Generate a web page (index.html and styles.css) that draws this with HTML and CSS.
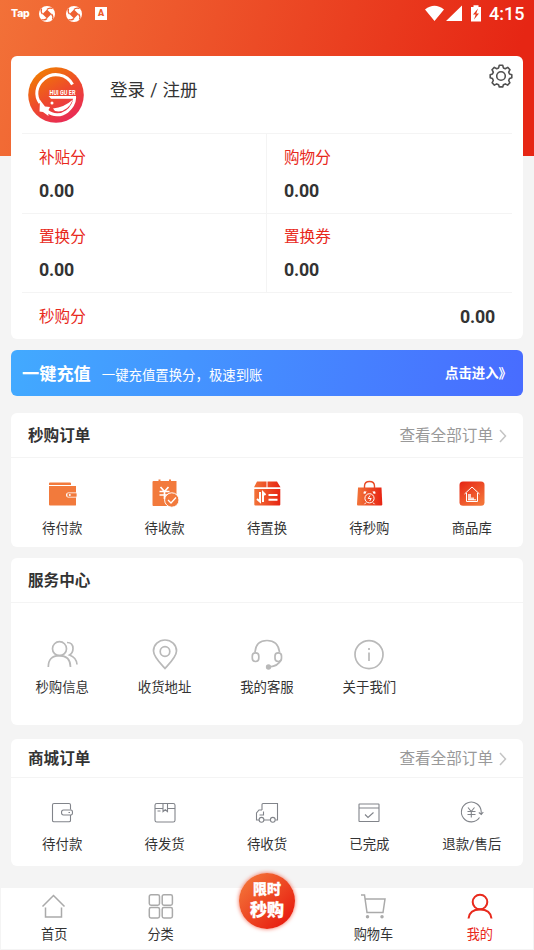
FILE: index.html
```html
<!DOCTYPE html>
<html lang="zh-CN">
<head>
<meta charset="utf-8">
<meta name="viewport" content="width=device-width">
<title>我的</title>
<link rel="stylesheet" href="styles.css">
</head>
<body>
<svg class="defs" width="0" height="0">
  <defs>
    <linearGradient id="warm" x1="0" y1="0" x2="1" y2="0"><stop offset="0" stop-color="#f27439"/><stop offset="1" stop-color="#e72413"/></linearGradient>
    <linearGradient id="warmRev" x1="0" y1="0" x2="0.7" y2="1"><stop offset="0" stop-color="#e62515"/><stop offset="1" stop-color="#f37338"/></linearGradient>
    <linearGradient id="logo" x1="0.2" y1="0" x2="0.8" y2="1"><stop offset="0" stop-color="#f08000"/><stop offset="0.5" stop-color="#ee4a2c"/><stop offset="1" stop-color="#e8265c"/></linearGradient>
    <symbol id="swirl" viewBox="0 0 18 18">
      <circle cx="9" cy="9" r="8" fill="#fff"/>
      <path d="M9 4.500L13.500 9 9 13.500 4.500 9z" fill="#ee6031"/>
      <path d="M9 4.500Q11 2.500 14.500 3.500M13.500 9Q15.500 11 14.500 14.500M9 13.500Q7 15.500 3.500 14.500M4.500 9Q2.500 7 3.500 3.500" fill="none" stroke="#ee6031" stroke-width="1.300"/>
    </symbol>
  </defs>
</svg>
<div class="page">
  <header class="hero">
    <div class="status">
      <span class="tap">Tap</span>
      <svg class="swirl" width="18" height="18"><use href="#swirl"/></svg>
      <svg class="swirl second" width="18" height="18"><use href="#swirl"/></svg>
      <span class="a-badge">A</span>
      <span class="spacer"></span>
      <svg width="56" height="18" viewBox="0 0 56 18" fill="#fff">
        <path d="M0 4.500Q9.500-3 19 4.500L9.500 16zM37 .5V16H21zM46 2h2.500V.300h5V2H56v14.500H46V2z"/>
        <path d="M53 3.500l-5 6h2.700L49 14.500l5-6h-2.700z" fill="#e93a1c"/>
      </svg>
      <span class="clock">4:15</span>
    </div>
  </header>

  <main class="content">
    <section class="card account">
      <div class="profile">
        <svg width="56" height="56" viewBox="0 0 56 56">
          <circle cx="28" cy="28" r="27.800" fill="url(#logo)"/>
          <path d="M44.500 17.500C39 7 25 4.500 16 12 7.500 19 7 29 12 36" fill="none" stroke="#fff" stroke-width="3"/>
          <path d="M19 44c6 5 14 5 20 .5 5-4 7.500-9 7.700-14" fill="none" stroke="#fff" stroke-width="3"/>
          <path d="M12 33l5 6.500 5 .5-2 4 .5 5-5.500-4-3.500-.5zM25 41.500q11-1 20-9-6 14-18 11.500zM20.500 29H48v2.800H23z" fill="#fff"/>
          <circle cx="24" cy="36" r="1.500" fill="#fff"/>
          <text x="21.500" y="27.500" textLength="26" lengthAdjust="spacingAndGlyphs" class="logo-text">HUI GU ER</text>
        </svg>
        <span class="login">登录 / 注册</span>
        <svg class="gear" width="24" height="24" viewBox="0 0 24 24" fill="none" stroke="#515151" stroke-width="1.600" stroke-linejoin="round">
          <circle cx="12" cy="12" r="4.300"/>
          <path d="M10.300 1.300h3.400l.7 2.600 1.900.8 2.400-1.300 2.300 2.300-1.300 2.400.8 1.900 2.300.7v3.100l-2.300.8-.8 1.900 1.200 2.300-2.300 2.300-2.300-1.200-1.900.8-.7 2.200h-3.400l-.7-2.200-1.900-.8-2.300 1.200-2.300-2.300 1.200-2.300-.8-1.900-2.300-.8v-3.100l2.300-.7.8-1.900-1.300-2.400 2.300-2.300 2.400 1.300 1.900-.8z"/>
        </svg>
      </div>
      <div class="points">
        <div class="cell"><span>补贴分</span><b>0.00</b></div>
        <div class="cell"><span>购物分</span><b>0.00</b></div>
        <div class="cell"><span>置换分</span><b>0.00</b></div>
        <div class="cell"><span>置换券</span><b>0.00</b></div>
        <div class="total"><span>秒购分</span><b>0.00</b></div>
      </div>
    </section>

    <section class="banner">
      <span class="banner-title">一键充值</span>
      <span class="banner-sub">一键充值置换分，极速到账</span>
      <span class="banner-go">点击进入》</span>
    </section>

    <section class="card flash">
      <div class="head"><h2>秒购订单</h2><span class="more">查看全部订单<svg width="8" height="14" viewBox="0 0 8 14"><path d="M1 1l5.500 6L1 13" fill="none" stroke="#c4c4c4" stroke-width="1.500"/></svg></span></div>
      <div class="grid">
        <div class="item">
          <svg width="32" height="32" viewBox="0 0 32 32"><path d="M3 5.500q0-1 1-1h20q1 0 1 1V7H3zM3 8h27v7h-8q-2 0-2 2t2 2h8v8q0 .5-1 .5H4q-1 0-1-1z" fill="#f27a3c"/><rect x="21" y="14.800" width="10" height="4.400" rx="1" fill="#f27a3c" stroke="#fff" stroke-width=".8"/><circle cx="23.800" cy="17" r="1" fill="#fff"/></svg>
          <span>待付款</span></div>
        <div class="item">
          <svg width="32" height="32" viewBox="0 0 32 32"><path d="M4.500 3h5V1.500h2V3h8.500V1.500h2V3h5.500v25h-23q-1 0-1-1V4q0-1 1-1z" fill="#f27a3c"/><path d="M11.500 9l4 4.500 4-4.500M10.500 13.500h10M10.500 17h10M15.500 13v8" fill="none" stroke="#fff" stroke-width="1.700"/><circle cx="22.800" cy="22" r="7.200" fill="#f27a3c" stroke="#fff"/><path d="M19 22l3 3 5-5.500" fill="none" stroke="#fff" stroke-width="1.300"/></svg>
          <span>待收款</span></div>
        <div class="item">
          <svg width="32" height="32" viewBox="0 0 32 32"><path d="M6 3.500h9.500v5.700H3zM16.500 3.500H26l3.500 5.700h-13zM3.300 11h26v15.500q0 1-1 1h-24q-1 0-1-1z" fill="url(#warm)"/><path d="M9 14v9.500L6 21M12 24v-9.500l2.500 2.500M17.500 17h9M17.500 21.700h9" fill="none" stroke="#fff" stroke-width="2"/></svg>
          <span>待置换</span></div>
        <div class="item">
          <svg width="32" height="32" viewBox="0 0 32 32"><path d="M5 9.500h23.500l.8 17q0 1-1 1H5q-1 0-1-1z" fill="url(#warm)"/><path d="M11.500 10V8q0-4.500 5-4.500t5 4.500v2" fill="none" stroke="#e94b27" stroke-width="1.400"/><circle cx="16.500" cy="20.300" r="4.600" fill="none" stroke="#fff"/><path d="M11 15.500l2-2M22 15.500l-2-2M13 24.500l-1.500 1.700M20 24.500l1.500 1.700M17 17.500l-1.800 3h3l-1.500 2.500" fill="none" stroke="#fff" stroke-width="1"/><circle cx="11.800" cy="14.500" r="1.200" fill="#fff"/><circle cx="21.200" cy="14.500" r="1.200" fill="#fff"/></svg>
          <span>待秒购</span></div>
        <div class="item">
          <svg width="32" height="32" viewBox="0 0 32 32"><rect x="3.500" y="3.500" width="25" height="24.300" rx="3.500" fill="url(#warmRev)"/><path d="M8.500 16L16 9l7.500 7M10.500 15v8.500h11V15" fill="none" stroke="#fff" stroke-width="1"/><path d="M12 16h3v3.500h3V22h-6z" fill="#fff" opacity=".75"/><path d="M12 21.800h8" stroke="#fff"/></svg>
          <span>商品库</span></div>
      </div>
    </section>

    <section class="card service">
      <div class="head"><h2>服务中心</h2></div>
      <div class="grid thin">
        <div class="item">
          <svg width="32" height="32" viewBox="0 0 32 32"><circle cx="13.500" cy="10.700" r="7"/><path d="M2.300 29q0-11.300 11-11.300T24.500 29M21 4.500q6 0 6 6 0 4.500-3.500 6.500 7 2.500 7.500 9.500"/></svg>
          <span>秒购信息</span></div>
        <div class="item">
          <svg width="32" height="32" viewBox="0 0 32 32"><path d="M16 30.500C13 27 4.500 19 4.500 13a11.500 11 0 0 1 23 0C27.500 19 19 27 16 30.500z"/><circle cx="16" cy="13.500" r="4.800"/></svg>
          <span>收货地址</span></div>
        <div class="item">
          <svg width="32" height="32" viewBox="0 0 32 32"><path d="M4 14Q5 2.500 16 2.500T28.500 14M30 22q-3 6-11.500 7"/><rect x="1.300" y="14.800" width="6.500" height="8.700" rx="3.200"/><rect x="24" y="14.800" width="6.500" height="8.700" rx="3.200"/><circle cx="17.500" cy="29" r="1.800" fill="#b9b9b9"/></svg>
          <span>我的客服</span></div>
        <div class="item">
          <svg width="32" height="32" viewBox="0 0 32 32"><circle cx="16" cy="16.600" r="14"/><path d="M16 14.500v8.500M16 10v2"/></svg>
          <span>关于我们</span></div>
      </div>
    </section>

    <section class="card mall">
      <div class="head"><h2>商城订单</h2><span class="more">查看全部订单<svg width="8" height="14" viewBox="0 0 8 14"><path d="M1 1l5.500 6L1 13" fill="none" stroke="#c4c4c4" stroke-width="1.500"/></svg></span></div>
      <div class="grid line">
        <div class="item">
          <svg width="32" height="32" viewBox="0 0 32 32"><path d="M24.500 12.500V8q0-1.500-1.500-1.500H8Q6.500 6.500 6.500 8v15.500q0 1.300 1.500 1.300h15q1.500 0 1.500-1.300V18"/><path d="M17.500 13H25q1.500 0 1.500 2.500T25 18h-7.500q-2 0-2-2.500t2-2.500zM22.500 15.500h1.500"/></svg>
          <span>待付款</span></div>
        <div class="item">
          <svg width="32" height="32" viewBox="0 0 32 32"><rect x="6" y="6.500" width="20" height="18.500" rx="1.800"/><path d="M6 11.500h8M18.500 11.500H26M14 6.500v8l2.300-1.800 2.200 1.800v-8M8.500 14h3"/></svg>
          <span>待发货</span></div>
        <div class="item">
          <svg width="32" height="32" viewBox="0 0 32 32"><path d="M11 13V7.500q0-1 1-1h14.500V23h-2M19.500 23H13M8 23H5.500v-7L8 13h3M12.500 14.500V18h-4"/><circle cx="10.500" cy="22.800" r="2.400"/><circle cx="21.800" cy="22.800" r="2.400"/></svg>
          <span>待收货</span></div>
        <div class="item">
          <svg width="32" height="32" viewBox="0 0 32 32"><rect x="6" y="7" width="20" height="17.500" rx=".5"/><path d="M6 11h20M12 17.500l3 3 5.500-5"/></svg>
          <span>已完成</span></div>
        <div class="item">
          <svg width="32" height="32" viewBox="0 0 32 32"><path d="M23.500 20.500A9.900 9.900 0 1 1 25.200 14.500V17M22.800 15.500l2.500 2 2-2.500M12 10.500l3.200 4 3.300-4M11.500 14.500h8M11.500 17.500h8M15.300 14.500v6"/></svg>
          <span>退款/售后</span></div>
      </div>
    </section>
  </main>

  <nav class="tabs">
    <a class="tab"><svg width="28" height="28" viewBox="0 0 28 28"><path d="M2.500 14.500L13.500 3.500l11 11M5.500 15.500V25h16v-9.500"/></svg><span>首页</span></a>
    <a class="tab"><svg width="28" height="28" viewBox="0 0 28 28"><rect x="2.300" y="2.700" width="10.200" height="10.500" rx="1.700"/><rect x="15.200" y="2.700" width="10.200" height="10.500" rx="1.700"/><rect x="2.300" y="15.500" width="10.200" height="10.500" rx="1.700"/><rect x="15.200" y="15.500" width="10.200" height="10.500" rx="1.700"/></svg><span>分类</span></a>
    <a class="tab"><span class="promo"><span class="small">限时</span><span class="big">秒购</span></span></a>
    <a class="tab"><svg width="28" height="28" viewBox="0 0 28 28"><path d="M2 3h3.500L8 20.500h16L26 7H6"/><circle cx="8.500" cy="24.700" r="1" fill="#aaa"/><circle cx="23" cy="24.700" r="1" fill="#aaa"/></svg><span>购物车</span></a>
    <a class="tab active"><svg width="28" height="28" viewBox="0 0 28 28"><circle cx="14" cy="10" r="7.300"/><path d="M2.500 26.500Q3.500 17.500 14 17.500t11.500 9"/></svg><span>我的</span></a>
  </nav>
</div>
</body>
</html>
```
FILE: styles.css
```css
* { box-sizing: border-box; }
body {
  margin: 0;
  background: #f4f4f4;
  color: #333;
  font-family: Roboto, "Noto Sans CJK SC", sans-serif;
}
.defs { display: block; position: absolute; }
.page { height: 950px; display: flex; flex-direction: column; overflow: hidden; }

.hero {
  height: 156px;
  flex: none;
  background: linear-gradient(107deg, #f27138 0%, #e62614 92%);
}
.status { display: flex; align-items: center; height: 27px; padding: 0 9px 0 11px; color: #fff; }
.tap { width: 27px; font: 800 10.5px/16px Inter, sans-serif; letter-spacing: -.2px; }
.swirl { flex: none; }
.second { margin-left: 9px; }
.a-badge {
  width: 12px; height: 13px; margin-left: 12px;
  background: #fff; color: #ee5a2a;
  font: 900 9px/13px Roboto, sans-serif; text-align: center;
}
.spacer { flex: 1; }
.clock { width: 36px; margin-left: 8px; font-size: 18px; font-weight: 500; line-height: 27px; white-space: nowrap; }

.content { flex: none; height: 832px; margin-top: -100px; padding: 0 11px; }
.card { background: #fff; border-radius: 6px; overflow: hidden; }
.account { height: 283px; padding: 0 11px; }
.profile { display: flex; align-items: flex-start; height: 77px; padding: 11px 0 0 6px; }
.logo-text { font: 700 6.5px Roboto, sans-serif; fill: #fff; }
.login { margin-left: 26px; margin-top: 11px; font-size: 17.5px; line-height: 24px; word-spacing: .8px; }
.gear { margin: -3px -1px 0 auto; }
.points { display: grid; grid-template-columns: 1fr 1fr; grid-template-rows: 80px 79px 47px; }
.cell { border-top: 1px solid #f4f4f4; padding: 12px 17px; }
.cell:nth-child(odd) { border-right: 1px solid #f4f4f4; }
.points span { display: block; color: #e8291c; font-size: 15.6px; line-height: 24px; }
.points b { display: block; font-size: 17.8px; line-height: 24px; font-weight: 700; letter-spacing: -.2px; }
.cell b { margin-top: 9px; }
.cell:nth-child(n+3) { padding-top: 11px; }
.total {
  grid-column: 1 / 3;
  display: flex; justify-content: space-between; align-items: center;
  border-top: 1px solid #f4f4f4; padding: 2px 17px 0;
}

.banner {
  display: flex; align-items: center;
  height: 46px; margin-top: 11px; padding: 0 11px;
  border-radius: 6px;
  background: linear-gradient(100deg, #42aaff, #486cff);
  color: #fff;
}
.banner-title { padding-top: 2px; font-size: 17.2px; font-weight: 700; line-height: 24px; }
.banner-sub { margin-left: 11px; padding-top: 5px; font-size: 13.4px; line-height: 20px; }
.banner-go { margin: 2px 0 0 auto; font-size: 13.4px; font-weight: 700; line-height: 20px; }

.head {
  display: flex; align-items: center; justify-content: space-between;
  height: 45px; padding: 2px 16px 0 17px;
  border-bottom: 1px solid #f4f4f4;
}
h2 { margin: 0; font-size: 15.6px; font-weight: 700; line-height: 24px; }
.more { display: flex; align-items: center; gap: 6px; color: #999; font-size: 15.6px; line-height: 24px; }
.grid { display: grid; grid-template-columns: repeat(5, 1fr); }
.item { display: flex; flex-direction: column; align-items: center; font-size: 13.4px; line-height: 20px; }
.item span { white-space: nowrap; }
.flash { height: 134px; margin-top: 17px; }
.flash .grid { padding-top: 20px; }
.flash .item { gap: 9px; }
.service { height: 167px; margin-top: 11px; }
.service .grid { padding-top: 35px; }
.service .item { gap: 8px; }
.thin svg { fill: none; stroke: #b9b9b9; stroke-width: 1.7; }
.mall { height: 127px; margin-top: 14px; }
.mall .head { height: 39px; padding-top: 1px; }
.mall .grid { padding-top: 19px; }
.mall .item { gap: 6px; }
.line svg { fill: none; stroke: #81848a; stroke-width: 1.1; }

.tabs { display: flex; flex: none; height: 61px; margin: 0 1px; background: #fff; }
.tab { flex: 1; display: flex; flex-direction: column; align-items: center; padding-top: 4px; font-size: 13.2px; line-height: 20px; }
.tab > span { margin-top: 5px; }
.tab svg { fill: none; stroke: #aaa; stroke-width: 1.5; }
.tab.active { color: #e8291c; }
.tab.active svg { stroke: #e8291c; stroke-width: 2; }
.tab .promo {
  display: flex; flex-direction: column; align-items: center; flex: none;
  width: 56px; height: 56px; margin-top: -19px; padding-top: 7px;
  border-radius: 50%;
  background: linear-gradient(135deg, #f37338 10%, #e82011 85%);
  box-shadow: 0 0 4px #f36b56;
  color: #fff; font-weight: 900;
}
.small { font-size: 14px; line-height: 19px; -webkit-text-stroke: .3px #fff; }
.big { font-size: 17px; line-height: 22px; -webkit-text-stroke: .3px #fff; }
```
